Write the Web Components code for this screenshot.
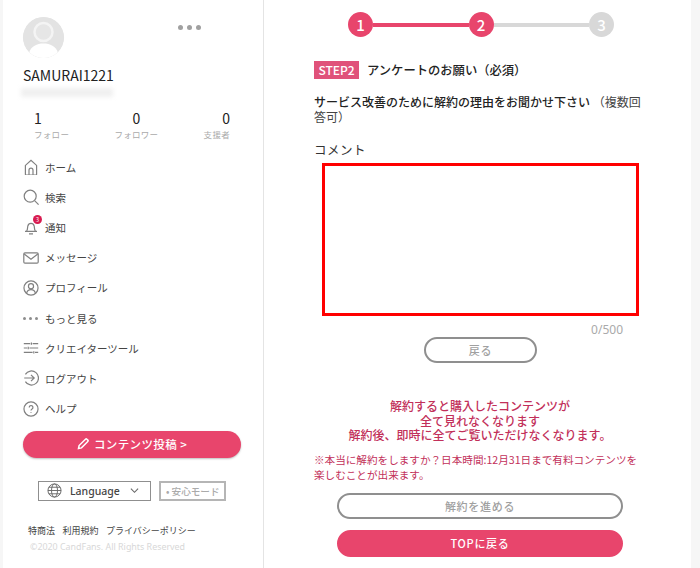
<!DOCTYPE html>
<html lang="ja">
<head>
<meta charset="utf-8">
<title>CandFans</title>
<style>
  html, body { margin: 0; height: 568px; overflow: hidden; background: #f6f6f6; }
  body { font-family: "Noto Sans CJK JP", "Noto Sans", sans-serif; display: flex; padding: 0 9px 0 3px; box-sizing: border-box; }
</style>
</head>
<body>
<side-bar></side-bar>
<step-page></step-page>

<script>
const ICONS = {
  home: `<path d="M3 19V8L10 1.500 17 8V19a1 1 0 0 1-1 1H4a1 1 0 0 1-1-1z"/><path d="M7.500 20v-6a2.500 2.500 0 0 1 5 0v6"/>`,
  search: `<circle cx="9" cy="9" r="7.500"/><path d="M14.500 14.500l5 5"/>`,
  bell: `<path d="M4.500 15c1.500-1.500 1-4 1.500-6 .5-2.200 2-3.500 4-3.500s3.500 1.300 4 3.500c.5 2 0 4.500 1.500 6"/><path d="M2.500 15.500h15M7.500 18.500h5"/>`,
  mail: `<rect x="1" y="3.500" width="18" height="13" rx="1.500"/><path d="M1.500 5l8.500 6.500L18.500 5"/>`,
  user: `<circle cx="10" cy="10" r="8.800"/><circle cx="10" cy="7.800" r="3.200"/><path d="M4.500 16.300c.8-3.300 3-4.300 5.500-4.300s4.700 1 5.500 4.300"/>`,
  tool: `<path d="M1 4.500h8M12 4.500h7M1 10h4M8 10h11M1 15.500h11M15 15.500h4M10.500 3v3M6.500 8.500v3M13.500 14v3"/>`,
  logout: `<path d="M3 5.500a8.800 8.800 0 1 1 0 9"/><path d="M1.500 10h12.500M10 6l4 4-4 4"/>`,
  help: `<circle cx="10" cy="10" r="8.800"/><path d="M7.800 8a2.300 2.300 0 1 1 3.500 2c-.9.600-1.300 1-1.300 2"/><path d="M10 14.200v.8"/>`
};

class SideBar extends HTMLElement {
  connectedCallback() {
    this.attachShadow({ mode: "open" });
    const menu = [
      ["home", "ホーム"], ["search", "検索"], ["bell", "通知"], ["mail", "メッセージ"],
      ["user", "プロフィール"], ["more", "もっと見る"], ["tool", "クリエイターツール"],
      ["logout", "ログアウト"], ["help", "ヘルプ"]
    ];
    this.shadowRoot.innerHTML = /*HTML*/ `
      <style>
        :host { display: block; width: 261px; height: 568px; flex: none; background: #fff; box-sizing: border-box; padding: 17px 0 0 20px; color: #333; border-right: 1px solid #e4e4e4; }
        .top { display: flex; justify-content: space-between; height: 40px; }
        .avatar { width: 41px; height: 41px; border-radius: 50%; background: #e3e3e3; overflow: hidden; display: block; }
        .dots { display: flex; gap: 4px; margin: 8px 62px 0 0; }
        .dots i { width: 5px; height: 5px; border-radius: 50%; background: #a0a0a0; }
        .name { font-size: 14px; line-height: 20px; margin-top: 8px; color: #222; }
        .blur { width: 92px; height: 9px; margin: 3px 0 0 -2px; background: #f0f0f0; filter: blur(2px); }
        .stats { display: flex; justify-content: space-between; width: 196px; margin: 12px 0 0 11px; }
        .stat { display: flex; flex-direction: column; align-items: center; }
        .stat b { font-weight: 400; font-size: 14px; line-height: 18px; color: #222; }
        .stat span { font-size: 8.500px; line-height: 14px; color: #aaa; letter-spacing: .3px; }
        .stat:first-child { align-items: flex-start; }
        .stat:last-child { align-items: flex-end; }
        nav { margin-top: 11px; }
        menu-row { height: 30.200px; }
        .post { width: 218px; height: 27px; margin-top: 7px; border: 0; border-radius: 14px; background: #e8456c; color: #fff; font: 500 11.500px "Noto Sans CJK JP", sans-serif; letter-spacing: .4px; display: flex; align-items: center; justify-content: center; gap: 5px; box-shadow: 0 1px 2px rgba(0,0,0,.25); padding: 0; }
        .post svg { width: 12px; height: 12px; fill: none; stroke: #fff; stroke-width: 1.500; }
        .opts { display: flex; gap: 8px; margin: 23px 0 0 15px; }
        .lang, .safe { height: 20px; box-sizing: border-box; border: 1px solid #8f8f8f; display: flex; align-items: center; font-size: 11px; }
        .lang { width: 113px; color: #444; padding-left: 8px; gap: 8px; font-family: "Noto Sans", sans-serif; font-size: 10.500px; font-weight: 500; }
        .lang svg { width: 15px; height: 15px; fill: none; stroke: #666; stroke-width: 1; flex: none; }
        .lang .chev { width: 9px; height: 9px; margin-left: 2px; stroke-width: 1.200; }
        .safe { width: 67px; color: #aaa; font-size: 9.600px; padding-left: 5px; font-weight: 500; border: 2px solid #b5b5b5; }
        .links { display: flex; gap: 7.500px; margin: 23px 0 0 5px; font-size: 9px; line-height: 14px; color: #444; }
        .copy { font-size: 8.900px; line-height: 14px; margin: 2px 0 0 7px; color: #d8d8d8; font-family: "Noto Sans", sans-serif; }
      </style>
      <div class="top">
        <svg class="avatar" viewBox="0 0 41 41"><circle cx="20.500" cy="20.500" r="20.500" fill="#e3e3e3"/><circle cx="20.500" cy="15" r="9" fill="#e6e6e6" stroke="#f4f4f4" stroke-width="2.500"/><path d="M6 36c2-7 8-9.500 14.500-9.500S33 29 35 36c-4 4-9 5.500-14.500 5.500S10 40 6 36z" fill="#fff"/></svg>
        <div class="dots"><i></i><i></i><i></i></div>
      </div>
      <div class="name">SAMURAI1221</div>
      <div class="blur"></div>
      <div class="stats">
        <div class="stat"><b>1</b><span>フォロー</span></div>
        <div class="stat"><b>0</b><span>フォロワー</span></div>
        <div class="stat"><b>0</b><span>支援者</span></div>
      </div>
      <nav>${menu.map(([icon, label]) => `<menu-row icon="${icon}">${label}</menu-row>`).join("")}</nav>
      <button class="post">
        <svg viewBox="0 0 12 12"><path d="M1.500 10.500l.6-3L8.500 1.200a1 1 0 0 1 1.400 0l.9.9a1 1 0 0 1 0 1.400L4.500 9.900z"/></svg>
        コンテンツ投稿 &gt;
      </button>
      <div class="opts">
        <div class="lang">
          <svg viewBox="0 0 16 16"><circle cx="8" cy="8" r="7"/><ellipse cx="8" cy="8" rx="3.200" ry="7"/><path d="M1 8h14M2 4.500h12M2 11.500h12"/></svg>
          Language
          <svg class="chev" viewBox="0 0 10 10"><path d="M1 3l4 4 4-4"/></svg>
        </div>
        <div class="safe">• 安心モード</div>
      </div>
      <div class="links"><span>特商法</span><span>利用規約</span><span>プライバシーポリシー</span></div>
      <div class="copy">©2020 CandFans. All Rights Reserved</div>
    `;
  }
}

class MenuRow extends HTMLElement {
  connectedCallback() {
    this.attachShadow({ mode: "open" });
    const icon = this.getAttribute("icon");
    const badge = icon === "bell" ? `<span class="badge">3</span>` : "";
    const graphic = icon === "more"
      ? `<div class="more"><i></i><i></i><i></i></div>`
      : `<svg viewBox="0 0 20 20">${ICONS[icon]}</svg>`;
    this.shadowRoot.innerHTML = /*HTML*/ `
      <style>
        :host { display: flex; align-items: center; gap: 6px; font-size: 10.500px; color: #444; }
        .icon { width: 16px; height: 16px; position: relative; flex: none; }
        svg { width: 16px; height: 16px; fill: none; stroke: #808080; stroke-width: 1.500; display: block; }
        .more { display: flex; gap: 3px; height: 16px; align-items: center; }
        .more i { width: 3px; height: 3px; border-radius: 50%; background: #8d8d8d; }
        .badge { position: absolute; top: -4px; right: -3px; width: 9px; height: 9px; border-radius: 50%; background: #d81b50; color: #fff; font-size: 6px; line-height: 9px; text-align: center; }
      </style>
      <div class="icon">${graphic}${badge}</div>
      <slot></slot>
    `;
  }
}

class StepBar extends HTMLElement {
  connectedCallback() {
    this.attachShadow({ mode: "open" });
    this.shadowRoot.innerHTML = /*HTML*/ `
      <style>
        :host { display: flex; align-items: center; width: 266px; margin-left: 34px; }
        i { display: block; flex: 1; height: 4px; }
        span { width: 25px; height: 25px; flex: none; border-radius: 50%; color: #fff; font-size: 15px; font-weight: 500; line-height: 25px; text-align: center; background: #e8456c; }
        .off { background: #d8d8d8; }
        .on { background: #e8456c; }
        .rest { background: #d8d8d8; }
      </style>
      <span>1</span><i class="on"></i><span>2</span><i class="rest"></i><span class="off">3</span>
    `;
  }
}

class PillButton extends HTMLElement {
  connectedCallback() {
    this.attachShadow({ mode: "open" });
    this.shadowRoot.innerHTML = /*HTML*/ `
      <style>
        :host { display: flex; align-items: center; justify-content: center; box-sizing: border-box; border: 2px solid #8f8f8f; border-radius: 14px; background: #fff; color: #a0a0a0; font-size: 11px; font-weight: 500; letter-spacing: .7px; height: 26px; }
        :host([primary]) { background: #e8456c; border-color: #e8456c; color: #fff; }
      </style>
      <slot></slot>
    `;
  }
}

class StepPage extends HTMLElement {
  connectedCallback() {
    this.attachShadow({ mode: "open" });
    this.shadowRoot.innerHTML = /*HTML*/ `
      <style>
        :host { display: block; flex: 1; background: #fff; box-sizing: border-box; padding: 12px 0 0 50px; color: #222; }
        .head { display: flex; align-items: center; gap: 8px; margin-top: 24px; font-size: 12.300px; font-weight: 500; }
        .tag { background: #e0527a; color: #fff; font-size: 12px; font-weight: 500; line-height: 18px; width: 45px; text-align: center; }
        .ask { margin: 15px 0 0; width: 335px; font-size: 12px; line-height: 15px; font-weight: 500; }
        .ask span { font-weight: 400; color: #444; }
        .label { margin: 17px 0 0; font-size: 12.500px; line-height: 18px; color: #333; letter-spacing: .5px; }
        .box { display: block; width: 317px; height: 153px; margin: 4px 0 0 8px; border: 3px solid #f00; box-sizing: border-box; resize: none; outline: none; }
        .count { width: 309px; text-align: right; font-size: 12px; line-height: 16px; margin-top: 6px; color: #aaa; font-family: "Noto Sans", sans-serif; }
        .back { width: 113px; margin: -1px 0 0 110px; }
        .warn { width: 332px; text-align: center; margin: 36px 0 0; font-size: 12px; line-height: 14.500px; font-weight: 500; color: #c2305a; }
        .note { width: 325px; margin: 9px 0 0; font-size: 10.600px; line-height: 15px; color: #c2305a; }
        .wide { width: 286px; margin-left: 23px; }
        .go { margin-top: 11px; }
        .top { margin-top: 11px; height: 27px; }
      </style>
      <step-bar></step-bar>
      <div class="head"><span class="tag">STEP2</span>アンケートのお願い（必須）</div>
      <p class="ask">サービス改善のために解約の理由をお聞かせ下さい <span>（複数回答可）</span></p>
      <p class="label">コメント</p>
      <textarea class="box"></textarea>
      <div class="count">0/500</div>
      <pill-button class="back">戻る</pill-button>
      <p class="warn">解約すると購入したコンテンツが<br>全て見れなくなります<br>解約後、即時に全てご覧いただけなくなります。</p>
      <p class="note">※本当に解約をしますか？日本時間:12月31日まで有料コンテンツを楽しむことが出来ます。</p>
      <pill-button class="wide go">解約を進める</pill-button>
      <pill-button class="wide top" primary>TOPに戻る</pill-button>
    `;
  }
}

customElements.define("menu-row", MenuRow);
customElements.define("side-bar", SideBar);
customElements.define("step-bar", StepBar);
customElements.define("pill-button", PillButton);
customElements.define("step-page", StepPage);
</script>
</body>
</html>
